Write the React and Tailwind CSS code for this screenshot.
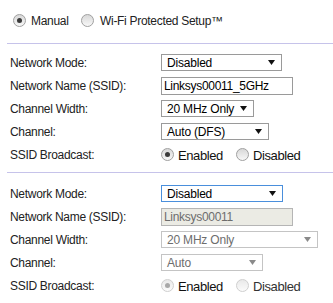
const Radio = ({ checked, disabled }) => (
  <span
    className={
      disabled
        ? "flex h-[13px] w-[13px] shrink-0 items-center justify-center rounded-full border border-[#cfcfcf] bg-linear-to-b from-[#e9e9e9] to-[#fbfbfb]"
        : "flex h-[13px] w-[13px] shrink-0 items-center justify-center rounded-full border border-[#a0a0a0] bg-linear-to-b from-[#d8d8d8] to-[#f8f8f8]"
    }
  >
    {checked && (
      <span
        className={
          disabled
            ? "h-[5px] w-[5px] rounded-full bg-[#a8a8a8]"
            : "h-[5px] w-[5px] rounded-full bg-[#3a3a3a]"
        }
      />
    )}
  </span>
);

const Arrow = ({ disabled }) => (
  <svg width="7" height="5" viewBox="0 0 7 5" className="ml-auto mr-[6px]">
    <polygon points="0,0 7,0 3.5,5" fill={disabled ? "#8a8a8a" : "#111"} />
  </svg>
);

const Select = ({ value, width, disabled, focused }) => (
  <div
    className={
      focused
        ? "flex h-[17px] items-center border border-[#4a8fdc] bg-white pl-[5px] text-[12px] tracking-[-0.2px] text-black"
        : disabled
        ? "flex h-[17px] items-center border border-[#c4c4c4] bg-white pl-[5px] text-[12px] tracking-[-0.2px] text-[#6d6d6d]"
        : "flex h-[17px] items-center border border-[#9a9a9a] bg-white pl-[5px] text-[12px] tracking-[-0.2px] text-black"
    }
    style={{ width }}
  >
    <span>{value}</span>
    <Arrow disabled={disabled} />
  </div>
);

const TextInput = ({ value, disabled }) => (
  <div
    className={
      disabled
        ? "flex h-[18px] w-[132px] items-center border border-[#b5b5b5] bg-[#ebebe4] pl-[2px] text-[12px] tracking-[-0.3px] text-[#6d6d6d]"
        : "flex h-[18px] w-[132px] items-center border border-[#9a9a9a] bg-white pl-[2px] text-[12px] tracking-[-0.3px] text-black"
    }
  >
    {value}
  </div>
);

const Row = ({ label, children }) => (
  <div className="flex h-[23px] items-center">
    <div className="w-[161px] pl-[10px] text-[12px] tracking-[-0.3px] text-[#222]">{label}</div>
    {children}
  </div>
);

const Broadcast = ({ disabled }) => (
  <div className="flex items-center text-[13px] tracking-[-0.4px] text-[#111]">
    <div className="flex w-[75px] items-center">
      <Radio checked disabled={disabled} />
      <span className="ml-[4px] mt-[2px]">Enabled</span>
    </div>
    <Radio disabled={disabled} />
    <span className={disabled ? "ml-[4px] mt-[2px] text-[#333]" : "ml-[4px] mt-[2px]"}>Disabled</span>
  </div>
);

const Divider = ({ className }) => <div className={`ml-[7px] h-px bg-[#c6c3ea] ${className}`} />;

export default function App() {
  return (
    <div className="h-[303px] w-[333px] bg-white pt-[9px] font-['Liberation_Sans',Arial,sans-serif]">
      <div className="flex h-[23px] items-center pl-[13px] text-[12px] tracking-[-0.3px] text-[#222]">
        <div className="flex w-[68px] items-center">
          <Radio checked />
          <span className="ml-[5px]">Manual</span>
        </div>
        <Radio />
        <span className="ml-[6px]">Wi-Fi Protected Setup™</span>
      </div>

      <Divider className="mt-[11px]" />

      <div className="mt-[7px]">
        <Row label="Network Mode:">
          <Select value="Disabled" width={121} />
        </Row>
        <Row label="Network Name (SSID):">
          <TextInput value="Linksys00011_5GHz" />
        </Row>
        <Row label="Channel Width:">
          <Select value="20 MHz Only" width={93} />
        </Row>
        <Row label="Channel:">
          <Select value="Auto (DFS)" width={108} />
        </Row>
        <Row label="SSID Broadcast:">
          <Broadcast />
        </Row>
      </div>

      <Divider className="mt-[6px]" />

      <div className="mt-[9px]">
        <Row label="Network Mode:">
          <Select value="Disabled" width={122} focused />
        </Row>
        <Row label="Network Name (SSID):">
          <TextInput value="Linksys00011" disabled />
        </Row>
        <Row label="Channel Width:">
          <Select value="20 MHz Only" width={157} disabled />
        </Row>
        <Row label="Channel:">
          <Select value="Auto" width={102} disabled />
        </Row>
        <Row label="SSID Broadcast:">
          <Broadcast disabled />
        </Row>
      </div>
    </div>
  );
}
